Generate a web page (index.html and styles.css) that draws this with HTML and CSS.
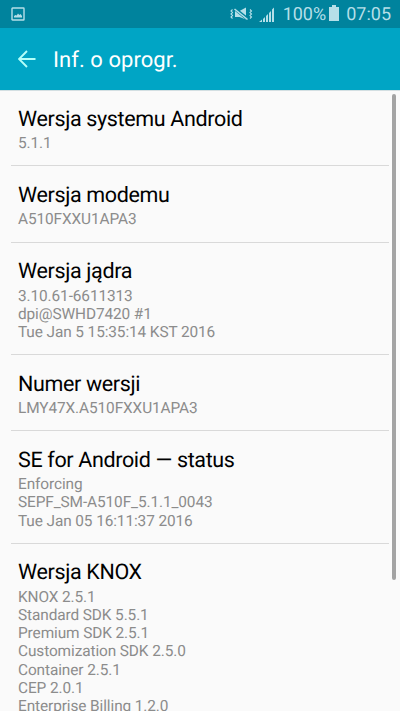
FILE: index.html
```html
<!DOCTYPE html>
<html lang="pl">
<head>
<meta charset="utf-8">
<title>Inf. o oprogr.</title>
<link rel="stylesheet" href="styles.css">
</head>
<body>
<div class="screen">
<header class="status">
<svg class="picture" width="14" height="14" viewBox="0 0 14 14"><rect x="1" y="1" width="12" height="12" rx=".5" fill="none" stroke="currentColor" stroke-width="1.4"/><path d="M3 10.500V9l1.500-1 1.200.5L7 6.500l1.300 1.500L9.500 7l1.500 2v1.500z" fill="currentColor"/></svg>
<div class="indicators">
<svg class="mute" width="23" height="14" viewBox="0 0 23 14"><path d="M5 4h4.500L16 .5v12L9.500 10H5z" fill="currentColor"/><path d="M2.500 2.500L1 4l1.500 1.500L1 7l1.500 1.500L1 10l1.500 1.500M20 2.500L21.500 4 20 5.500 21.500 7 20 8.500l1.500 1.500-1.500 1.500" fill="none" stroke="currentColor" stroke-width="1.100"/><path d="M4.500 1.500l13 10.500" stroke="#00839d" stroke-width="3.400"/><path d="M4.500 2l13 10.500" stroke="currentColor" stroke-width="1.600"/></svg>
<svg class="signal" width="16" height="15" viewBox="0 0 16 15"><path d="M0 15l3-2.500V15zM4 12l2-2v5H4zM7 9L9 7V15H7zM10 6l2-2V15h-2zM13 2.500L15 .5V15h-2z" fill="currentColor"/></svg>
<span class="percent">100%</span>
<svg class="battery" width="10" height="16" viewBox="0 0 10 16"><path d="M3 0h4v2h3v14H0V2h3z" fill="currentColor"/></svg>
<span class="clock">07:05</span>
</div>
</header>
<nav class="bar">
<svg class="back" width="18" height="18" viewBox="0 0 18 18"><path d="M17.500 9H1.500M9 1L1 9l8 8" fill="none" stroke="currentColor" stroke-width="1.900"/></svg>
<h1>Inf. o oprogr.</h1>
</nav>
<main class="list">
<section><h2>Wersja systemu Android</h2><p>5.1.1</p></section>
<section><h2>Wersja modemu</h2><p>A510FXXU1APA3</p></section>
<section><h2>Wersja jądra</h2><p>3.10.61-6611313</p><p>dpi@SWHD7420 #1</p><p>Tue Jan 5 15:35:14 KST 2016</p></section>
<section><h2>Numer wersji</h2><p>LMY47X.A510FXXU1APA3</p></section>
<section><h2>SE for Android — status</h2><p>Enforcing</p><p>SEPF_SM-A510F_5.1.1_0043</p><p>Tue Jan 05 16:11:37 2016</p></section>
<section><h2>Wersja KNOX</h2><p>KNOX 2.5.1</p><p>Standard SDK 5.5.1</p><p>Premium SDK 2.5.1</p><p>Customization SDK 2.5.0</p><p>Container 2.5.1</p><p>CEP 2.0.1</p><p>Enterprise Billing 1.2.0</p></section>
</main>
<div class="scrollbar"></div>
</div>
</body>
</html>
```
FILE: styles.css
```css
* { box-sizing: border-box; }
body, h1, h2, p { margin: 0; }
body { font-family: Roboto, sans-serif; background: #fafafa; text-rendering: geometricPrecision; }
.screen { position: relative; height: 711px; overflow: hidden; }
.status { height: 28px; padding: 0 9px 0 11px; display: flex; align-items: center; justify-content: space-between; background: #00839d; color: #b5dfe8; }
.indicators { display: flex; align-items: center; font-size: 18px; }
.signal { margin-left: 6px; }
.percent { margin-left: 8px; padding-top: 1px; }
.battery { margin-left: 3px; margin-top: -2px; }
.clock { margin-left: 7px; padding-top: 1px; }
.bar { height: 62px; padding: 0 18px; display: flex; align-items: center; gap: 17px; background: #00a5c5; color: #fff; box-shadow: 0 1px #d3dfe2; }
.back { color: #b4fff9; }
h1 { font-size: 22px; font-weight: 400; padding-top: 2px; letter-spacing: .05px; }
.list { padding: 0 11px; }
section { padding: 15.500px 7px 13.100px; border-bottom: 1px solid #d9d9d9; }
h2 { font-size: 21.500px; line-height: 28px; font-weight: 400; letter-spacing: -.35px; color: #000; padding-bottom: .5px; }
p { font-size: 15.400px; line-height: 18.150px; letter-spacing: -.1px; color: #8c8c8c; white-space: nowrap; }
.scrollbar { position: absolute; top: 94px; right: 4px; width: 4px; height: 486px; background: #a3a3a3; border-radius: 2px; }
```
